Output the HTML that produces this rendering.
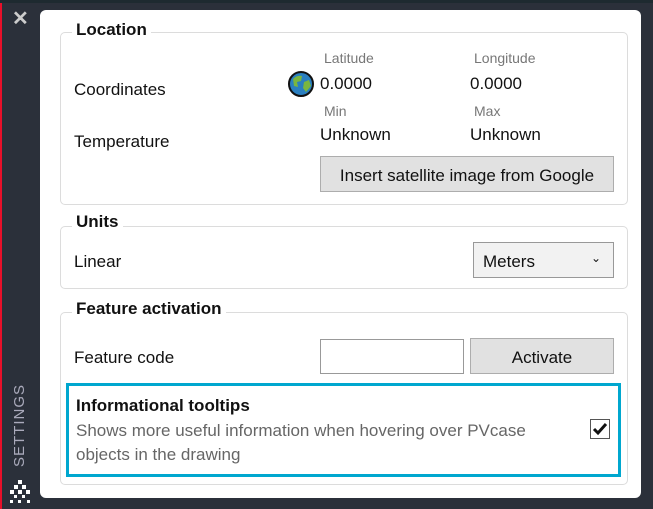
<!DOCTYPE html>
<html><head><style>
*{margin:0;padding:0;box-sizing:border-box}
body{width:653px;height:509px;background:#2b303a;position:relative;overflow:hidden;font-family:"Liberation Sans",sans-serif;font-size:16px;color:#111}
.a{position:absolute}
.grp{position:absolute;border:1px solid #dcdcdc;border-radius:5px}
.t{position:absolute;font-weight:bold;font-size:17px;background:#fff;padding:0 4px}
.s{color:#777;font-size:14px}
.btn{position:absolute;border:1px solid #adadad;background:#e1e1e1;text-align:center}
</style></head><body>
<div class="a" style="left:0;top:0;width:2px;height:509px;background:#e8102a"></div>
<div class="a" style="left:0;top:0;width:653px;height:3px;background:#1e2a30"></div>
<div class="a" style="left:12px;top:6px;color:#ccc;font-size:20px;font-weight:bold">✕</div>
<div class="a" style="left:11px;top:467px;transform:rotate(-90deg);transform-origin:0 0;color:#aab;font-size:15px;letter-spacing:1px">SETTINGS</div>
<svg class="a" style="left:8px;top:480px" width="26" height="26"><g fill="#fff"><rect x="10" y="0" width="4" height="4"/><rect x="6" y="5" width="4" height="4"/><rect x="14" y="5" width="4" height="4"/><rect x="2" y="10" width="4" height="4"/><rect x="10" y="10" width="4" height="4"/><rect x="18" y="10" width="4" height="4"/><rect x="6" y="15" width="3" height="3"/><rect x="14" y="15" width="3" height="3"/><rect x="2" y="20" width="3" height="3"/><rect x="10" y="20" width="3" height="3"/><rect x="19" y="20" width="3" height="3"/></g></svg>
<div class="a" style="left:40px;top:10px;width:601px;height:488px;background:#fff;border-radius:6px"></div>

<div class="grp" style="left:60px;top:32px;width:568px;height:173px"></div>
<div class="t" style="left:72px;top:20px">Location</div>
<div class="a" style="left:74px;top:80px;font-size:17px">Coordinates</div>
<div class="a" style="left:74px;top:132px;font-size:17px">Temperature</div>
<div class="a s" style="left:324px;top:50px">Latitude</div>
<div class="a s" style="left:474px;top:50px">Longitude</div>
<svg class="a" style="left:287px;top:70px" width="28" height="28"><circle cx="14" cy="14" r="12" fill="#2a7fc0" stroke="#111" stroke-width="2"/><path d="M6 9 Q10 5 15 6 L14 11 L10 12 L11 17 L7 16Z M17 12 L22 10 L24 16 L19 22 L16 18Z" fill="#7ab640"/></svg>
<div class="a" style="left:320px;top:74px;font-size:17px">0.0000</div>
<div class="a" style="left:470px;top:74px;font-size:17px">0.0000</div>
<div class="a s" style="left:324px;top:103px">Min</div>
<div class="a s" style="left:474px;top:103px">Max</div>
<div class="a" style="left:320px;top:125px;font-size:17px">Unknown</div>
<div class="a" style="left:470px;top:125px;font-size:17px">Unknown</div>
<div class="btn" style="left:320px;top:156px;width:294px;height:36px;line-height:38px;font-size:17px">Insert satellite image from Google</div>

<div class="grp" style="left:60px;top:226px;width:568px;height:63px"></div>
<div class="t" style="left:72px;top:212px">Units</div>
<div class="a" style="left:74px;top:252px;font-size:17px">Linear</div>
<div class="a" style="left:473px;top:242px;width:141px;height:36px;border:1px solid #999;background:#f2f2f2;line-height:37px;padding-left:9px;font-size:17px">Meters<span style="position:absolute;right:12px;top:-3px;font-size:12px">⌄</span></div>

<div class="grp" style="left:60px;top:312px;width:568px;height:173px"></div>
<div class="t" style="left:72px;top:299px">Feature activation</div>
<div class="a" style="left:74px;top:348px;font-size:17px">Feature code</div>
<div class="a" style="left:320px;top:339px;width:144px;height:35px;border:1px solid #999;background:#fff"></div>
<div class="btn" style="left:470px;top:338px;width:144px;height:36px;line-height:38px;font-size:17px">Activate</div>
<div class="a" style="left:66px;top:383px;width:555px;height:94px;border:3px solid #00a7cf"></div>
<div class="a" style="left:76px;top:396px;font-weight:bold;font-size:17px">Informational tooltips</div>
<div class="a" style="left:76px;top:419px;color:#666;line-height:24px;width:470px;font-size:17px">Shows more useful information when hovering over PVcase objects in the drawing</div>
<div class="a" style="left:590px;top:419px;width:20px;height:20px;border:1px solid #555;background:#fff"></div>
<svg class="a" style="left:590px;top:419px" width="20" height="20"><path d="M4 10 L8 14 L16 5" fill="none" stroke="#111" stroke-width="3"/></svg>
</body></html>
